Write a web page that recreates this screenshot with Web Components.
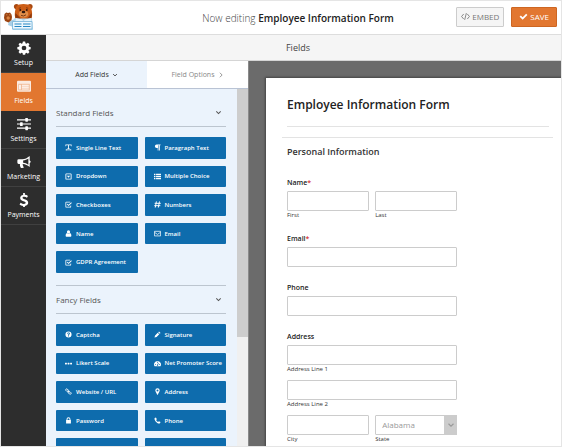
<!DOCTYPE html>
<html lang="en">
<head>
<meta charset="utf-8">
<title>Form Builder</title>
<style>
  html, body { margin: 0; height: 100%; }
  body {
    font-family: "Open Sans", "Noto Sans", sans-serif;
    color: #444;
    overflow: hidden;
  }
</style>
</head>
<body>
<form-builder></form-builder>
<script>
const ICONS = {
  gear: '<path fill-rule="evenodd" d="M6.7.6h2.6l.4 2 1.1.5 1.7-1.2 1.8 1.8-1.1 1.7.5 1.2 1.9.3v2.6l-2 .4-.5 1.1 1.2 1.7-1.8 1.8-1.7-1.1-1.1.5-.4 1.9H6.7l-.4-2-1.1-.5-1.7 1.2-1.8-1.8 1.1-1.7-.5-1.1-1.9-.4V6.9l2-.3.5-1.2-1.2-1.7 1.8-1.8 1.7 1.1 1.1-.5zM8 5.3a2.7 2.7 0 1 0 0 5.4 2.7 2.7 0 0 0 0-5.4z"/>',
  form: '<rect y="2" width="16" height="12.5" rx="1.2" opacity=".85"/><path d="M1.5 5.5h13v7.5h-13z" fill="#e27730" opacity=".45"/><path d="M5.5 6.5h8v1.2h-8zM5.5 8.7h8v1.2h-8zM5.5 10.9h8v1.2h-8zM2.5 6.5h1.8v5.6H2.5z"/>',
  sliders: '<path d="M0 2.5h16v1.4H0zM0 7.3h16v1.4H0zM0 12.1h16v1.4H0z"/><rect x="9.5" y="1" width="3" height="4.3" rx=".6"/><rect x="3.5" y="5.9" width="3" height="4.3" rx=".6"/><rect x="9.5" y="10.7" width="3" height="4.3" rx=".6"/>',
  horn: '<path fill-rule="evenodd" d="M14.5 1v5.2a1.5 1.5 0 0 1 0 2.9v4.6c-2.5-2-5-3.2-7.7-3.4-.7.6-.4 1.3.2 1.8-.4.7.2 1.3 1 1.9-.7 1.2-3 1.2-3.9.3C3.6 12.6 3 11.4 3.5 10.2H1.8A1.5 1.5 0 0 1 .4 8.7V6.3a1.5 1.5 0 0 1 1.5-1.5H6C9 4.8 11.8 3.3 14.5 1zM13 4c-1.9 1.3-3.9 2-6 2.2v2.6c2.1.2 4.1.9 6 2.2z"/>',
  dollar: '<path d="M7 0h2v2.1c1.3.1 2.6.6 3.5 1.3l-1.1 2c-1-.7-2-1.1-3.2-1.1-1.2 0-1.9.5-1.9 1.2 0 .9.9 1.2 2.4 1.7 2.3.8 4.1 1.7 4.1 4 0 1.9-1.4 3.3-3.8 3.6V16H7v-1.2c-1.6-.1-3.1-.8-4.1-1.7l1.3-2c1.1.9 2.4 1.4 3.7 1.4 1.3 0 2-.5 2-1.3 0-1-1-1.4-2.5-1.9C5.3 8.6 3.6 7.7 3.6 5.6 3.6 3.8 5 2.5 7 2.2z"/>',
  code: '<path d="M4.8 3.5 1 8l3.8 4.5M11.2 3.5 15 8l-3.8 4.5M9.5 2l-3 12" fill="none" stroke="currentColor" stroke-width="1.5"/>',
  check: '<path d="m1 8.6 2.3-2.4 3.2 3.1 6.2-6.2L15 5.5l-8.5 8.4z"/>',
  down: '<path d="m3 5.5 5 5 5-5" fill="none" stroke="currentColor" stroke-width="2.3"/>',
  right: '<path d="m5 2 6 6-6 6" fill="none" stroke="currentColor" stroke-width="2.3"/>',
  text: '<path d="M1 1h14v4h-1.3l-.7-2H9v7h2v1.5H5V10h2V3H3l-.7 2H1zM1 13.5l2.5-2v1.3h9v-1.3l2.5 2-2.5 2v-1.3h-9v1.3z"/>',
  para: '<path d="M6 1h9v1.8h-1.5V15h-1.8V2.8h-1.5V15H8.4V9H6a4 4 0 0 1 0-8z"/>',
  drop: '<path fill-rule="evenodd" d="M3 1h10a2 2 0 0 1 2 2v10a2 2 0 0 1-2 2H3a2 2 0 0 1-2-2V3a2 2 0 0 1 2-2zm0 1.8v10.4h10V2.8zM4.3 6h7.4L8 11z"/>',
  list: '<path d="M0 1.5h3.3v3H0zM4.7 1.5H16v3H4.7zM0 6.5h3.3v3H0zM4.7 6.5H16v3H4.7zM0 11.5h3.3v3H0zM4.7 11.5H16v3H4.7z"/>',
  tick: '<path d="M12.2 1.5H3a2 2 0 0 0-2 2V13a2 2 0 0 0 2 2h9a2 2 0 0 0 2-2V9.5l-1.8 1.7v2H2.8V3.3h8z"/><path d="m4 7.5 1.5-1.5 2.7 2.6 5.8-5.8 1.6 1.6-7.4 7.3z"/>',
  hash: '<path d="m5.5 1-2.6 14M12.5 1 9.9 15M1.5 5.3h14M.5 10.7h14" fill="none" stroke="currentColor" stroke-width="2.2"/>',
  user: '<circle cx="8" cy="4.5" r="3.7"/><path d="M4.5 7c1.8 2 5.2 2 7 0 2 .9 3 3.5 3 6 0 1.5-1 2.3-2.3 2.3H3.8C2.5 15.3 1.5 14.5 1.5 13c0-2.5 1-5.1 3-6z"/>',
  mail: '<path d="M1 3h14v10.5H1zM1.5 5.5 8 10l6.5-4.5" fill="none" stroke="currentColor" stroke-width="1.7"/>',
  help: '<path fill-rule="evenodd" d="M8 1a7 7 0 1 1 0 14A7 7 0 0 1 8 1zM4.8 6h2.1c.1-.8 2.1-.9 2.1.2 0 1-2.1 1-2.1 3.3h2c0-1.4 2.3-1.4 2.3-3.6C11.2 2.6 5 2.6 4.8 6zM6.9 10.5v2h2v-2z"/>',
  pencil: '<path d="m11.5 1 3.5 3.5-2 2L9.5 3zM8.5 4 12 7.5 6 13.5 1 15l1.5-5z"/>',
  dots: '<rect x="0" y="6" width="4.3" height="4" rx="1"/><rect x="5.9" y="6" width="4.3" height="4" rx="1"/><rect x="11.7" y="6" width="4.3" height="4" rx="1"/>',
  gauge: '<path fill-rule="evenodd" d="M8 2a8 8 0 0 1 6.8 12H1.2A8 8 0 0 1 8 2zM7 4v2h2V4zM2.5 9v2h2V9zM11.7 9v2h2V9zM9.5 6.5 8 10a1.6 1.6 0 1 0 1.3.5l1.5-3.5z"/>',
  link: '<g fill="none" stroke="currentColor" stroke-width="2"><rect x="1.5" y="3" width="7" height="4.5" rx="2" transform="rotate(45 5 5)"/><rect x="7.5" y="9" width="7" height="4.5" rx="2" transform="rotate(45 11 11)"/><path d="m6 6 4 4"/></g>',
  pin: '<path fill-rule="evenodd" d="M8 .5a5 5 0 0 1 5 5c0 2.5-2.5 5-4 9.5-.3.8-1.7.8-2 0C5.5 10.5 3 8 3 5.5a5 5 0 0 1 5-5zM8 3.3a2.3 2.3 0 1 0 0 4.6 2.3 2.3 0 0 0 0-4.6z"/>',
  lock: '<path fill-rule="evenodd" d="M3.5 7V5a4.5 4.5 0 0 1 9 0v2h1v8h-11V7zM5.7 7h4.6V5a2.3 2.3 0 0 0-4.6 0z"/>',
  phone: '<path d="M1.5 2.5 4.5 1l2 4-1.7 1.6c.9 2 2.5 3.6 4.6 4.6L11 9.5l4 2-1.5 3c-1 .9-3.5.7-6-1C4.5 11.5 2.5 9 1.5 6c-.4-1.5-.4-2.8 0-3.5z"/>',
  clock: '<path d="M3 2h10v12H3zM4 0h2v4H4zM10 0h2v4h-2z"/>',
  eye: '<path d="M0 8c4-7 12-7 16 0-4 7-12 7-16 0z"/>'
};

function define(name, render) {
  customElements.define(name, class extends HTMLElement {
    connectedCallback() {
      if (this.shadowRoot) return;
      const attr = (key) => this.getAttribute(key) || '';
      this.attachShadow({ mode: 'open' }).innerHTML = render(attr, this);
    }
  });
}

define('ui-icon', (a) => `
  <style>
    :host { display: inline-block; flex: none; width: var(--icon, 7px); height: var(--icon, 7px); }
    svg { display: block; width: 100%; height: 100%; }
  </style>
  <svg viewBox="0 0 16 16" fill="currentColor" aria-hidden="true">${ICONS[a('name')]}</svg>`);

define('bear-logo', () => `
  <style>:host { display: block; width: 32px; height: 28px; } svg { display: block; }</style>
  <svg width="32" height="28" viewBox="0 0 32 28" role="img" aria-label="Bear mascot">
    <path d="M6 18l5-1.5 2 5-3 2.5-5-2z" fill="#a9cfe6"/>
    <circle cx="13.5" cy="3.5" r="2.6" fill="#a8480f"/><circle cx="27" cy="3.5" r="2.6" fill="#a8480f"/>
    <path d="M13.5 3.5C15.500.3 25.5.3 27.5 3.5c1.700 3.5 2 8 1.2 11.5-2 3-14.500 3-16.500 0-.8-3.5-.5-8 1.300-11.5z" fill="#cc5d16"/>
    <path d="M12.500 10c-.8 3 0 5 1 6.5h5zM28.5 10c.6 3 0 5-1 6.5h-4z" fill="#8e3b10"/>
    <ellipse cx="20.5" cy="11" rx="4.8" ry="3.4" fill="#e08d48"/>
    <ellipse cx="20.5" cy="9" rx="1.8" ry="1.2" fill="#34190e"/>
    <path d="M18 12.3q2.5 1.7 5-.5" fill="none" stroke="#5c260e" stroke-width=".8"/>
    <circle cx="17.3" cy="7" r=".9" fill="#34190e"/><circle cx="23.8" cy="7" r=".9" fill="#34190e"/>
    <path d="M15.8 5.3l2.2-.6M23 4.7l2.2.6" stroke="#6a2b0d" stroke-width=".7"/>
    <path d="M11 15.5h18l1 11.5H9.500z" fill="#b4d9ee"/>
    <path d="M13 15l6 1.5 1.5 2 1.5-2 6-1.5.5 3.5-6.5 1h-3l-6.5-1z" fill="#e3f2fa"/>
    <path d="M9.5 18.5h19.500v7.500h-19.500z" fill="#edf7fd" stroke="#72b1d8" stroke-width=".8"/>
    <path d="M11.5 21h7M11.5 23.5h7M20 21h7.5M20 23.5h7.5" stroke="#2687c4" stroke-width="1.2"/>
    <path d="M1.500 11l1.700-1.500 1.800.5 2-.5 1.500 2 .5 2.500-.5 3-3 2.500-3.500-1.500L1 15z" fill="#9c4512"/>
    <circle cx="5.2" cy="15" r="1.7" fill="#dc8542"/><path d="M3.3 11.8h1M6.3 11.8h1" stroke="#e2965a"/>
  </svg>`);

define('nav-item', (a, el) => `
  <style>
    :host { display: block; border-bottom: 1px solid #404040; background: #2d2d2d; }
    :host([active]) { background: #e27730; border-color: #e27730; }
    a { display: flex; flex-direction: column; align-items: center; gap: 2px; height: 31px; padding-top: 6px;
        color: #fff; text-decoration: none; font-size: 7px; line-height: 12px; font-weight: 400; --icon: 14px; }
  </style>
  <a href="#" ${el.hasAttribute('active') ? 'aria-current="page"' : ''}><ui-icon name="${a('icon')}"></ui-icon><slot></slot></a>`);

define('side-nav', () => `
  <style>:host { display: block; flex: none; width: 45px; background: #2d2d2d; }</style>
  <nav>
    <nav-item icon="gear">Setup</nav-item>
    <nav-item icon="form" active>Fields</nav-item>
    <nav-item icon="sliders">Settings</nav-item>
    <nav-item icon="horn">Marketing</nav-item>
    <nav-item icon="dollar">Payments</nav-item>
  </nav>`);

define('top-button', (a) => `
  <style>
    :host { display: block; }
    button { display: flex; align-items: center; justify-content: center; gap: 2px; height: 20px; padding: 0 4px;
      border: 1px solid #ccc; border-radius: 1px; background: #f5f5f5; color: #777;
      font: 8px/12px "Open Sans", sans-serif; --icon: 9px; }
    :host([primary]) button { background: #e27730; border-color: #cd6622; color: #fff; padding: 0 7px; }
  </style>
  <button type="button"><ui-icon name="${a('icon')}"></ui-icon><slot></slot></button>`);

define('top-bar', () => `
  <style>
    :host { display: grid; grid-template-columns: auto 1fr auto; align-items: center; flex: none;
      height: 33px; border-bottom: 1px solid #ddd; background: #fff; }
    bear-logo { grid-area: 1 / 1; margin: 0 0 2px 2px; }
    h1 { grid-area: 1 / 1 / 2 / -1; justify-self: center; margin: 0; padding-left: 34px;
      font-size: 10px; line-height: 16px; font-weight: 300; color: #444; }
    b { font-weight: 600; color: #222; }
    div { grid-area: 1 / 3; display: flex; gap: 7px; padding-right: 4px; margin-bottom: 2px; }
  </style>
  <bear-logo></bear-logo>
  <h1>Now editing <b>Employee Information Form</b></h1>
  <div><top-button icon="code">EMBED</top-button><top-button icon="check" primary>SAVE</top-button></div>`);

define('field-button', (a) => `
  <style>
    :host { display: grid; }
    button { display: flex; align-items: center; gap: 4px; min-width: 0; padding: 0 9px; border: 0; border-radius: 1px;
      background: #0e6cad; color: #fff; font: 600 6px/10px "Open Sans", sans-serif; white-space: nowrap; --icon: 7px; }
  </style>
  <button type="button"><ui-icon name="${a('icon')}"></ui-icon><slot></slot></button>`);

define('field-group', (a) => `
  <style>
    :host { display: block; }
    h2 { margin: 0; border-bottom: 1px solid #bcc5cf; }
    h2 button { display: flex; align-items: center; justify-content: space-between; width: 100%; height: 27px;
      padding: 0 4px 0 0; border: 0; background: none; color: #555; font: 8px/12px "Open Sans", sans-serif; --icon: 7px; }
    div { display: grid; grid-template-columns: 1fr 1fr; grid-auto-rows: 1fr; gap: 7px; min-height: 136px; margin: 10px 0 12px; }
  </style>
  <h2><button type="button" aria-expanded="true">${a('heading')}<ui-icon name="down"></ui-icon></button></h2>
  <div><slot></slot></div>`);

define('field-panel', () => `
  <style>
    :host { display: flex; flex-direction: column; flex: none; width: 202px; background: #ebf3fc; }
    .tabs { display: grid; grid-template-columns: 1fr 1fr; flex: none; height: 27px; border-bottom: 1px solid #b9c3d4; }
    .tabs button { display: flex; align-items: center; justify-content: center; gap: 3px; border: 0; background: #fff;
      color: #888; font: 7px/12px "Open Sans", sans-serif; --icon: 6px; }
    .tabs button[aria-selected=true] { background: #ebf3fc; color: #333; }
    .body { display: flex; flex: 1; min-height: 0; }
    .list { flex: 1; padding: 10px 11px 0 10px; overflow: hidden; }
    .list field-group + field-group { border-top: 1px solid #bcc5cf; }
    .bar { width: 11px; background: #f0f0f0; }
    .thumb { height: 248px; background: #cdcdcd; }
  </style>
  <div class="tabs" role="tablist">
    <button type="button" role="tab" aria-selected="true">Add Fields <ui-icon name="down"></ui-icon></button>
    <button type="button" role="tab" aria-selected="false">Field Options <ui-icon name="right"></ui-icon></button>
  </div>
  <div class="body">
    <div class="list">
      <field-group heading="Standard Fields">
        <field-button icon="text">Single Line Text</field-button>
        <field-button icon="para">Paragraph Text</field-button>
        <field-button icon="drop">Dropdown</field-button>
        <field-button icon="list">Multiple Choice</field-button>
        <field-button icon="tick">Checkboxes</field-button>
        <field-button icon="hash">Numbers</field-button>
        <field-button icon="user">Name</field-button>
        <field-button icon="mail">Email</field-button>
        <field-button icon="tick">GDPR Agreement</field-button>
      </field-group>
      <field-group heading="Fancy Fields">
        <field-button icon="help">Captcha</field-button>
        <field-button icon="pencil">Signature</field-button>
        <field-button icon="dots">Likert Scale</field-button>
        <field-button icon="gauge">Net Promoter Score</field-button>
        <field-button icon="link">Website / URL</field-button>
        <field-button icon="pin">Address</field-button>
        <field-button icon="lock">Password</field-button>
        <field-button icon="phone">Phone</field-button>
        <field-button icon="clock"></field-button>
        <field-button icon="eye"></field-button>
      </field-group>
    </div>
    <div class="bar" aria-hidden="true"><div class="thumb"></div></div>
  </div>`);

const LABEL = 'display: block; padding: 0 0 2px; font-size: 7px; line-height: 12px; font-weight: 600; color: #222;';

define('text-box', (a, el) => `
  <style>
    :host { display: block; min-width: 0; }
    .label { ${LABEL} }
    .caption { display: block; padding-top: 1px; font-size: 6px; line-height: 6px; color: #333; }
    i { font-style: normal; color: #d63637; }
    .control { display: grid; grid-template-columns: 1fr 13px; }
    input, select { box-sizing: border-box; grid-area: 1 / 1 / 2 / -1; width: 100%; height: 20px; margin: 0; padding: 0 6px;
      border: 1px solid #ccc; border-radius: 1px; background: #fff; font: 8px/12px "Open Sans", sans-serif; color: #999; }
    select { appearance: none; opacity: 1; }
    .arrow { grid-area: 1 / 2; display: grid; place-items: center; z-index: 1; background: #ccc; color: #999; pointer-events: none; --icon: 8px; }
  </style>
  ${a('label') ? `<label class="label" for="c">${a('label')}${el.hasAttribute('required') ? '<i>*</i>' : ''}</label>` : ''}
  <div class="control">${a('option')
    ? `<select id="c"><option>${a('option')}</option></select><span class="arrow"><ui-icon name="down"></ui-icon></span>`
    : '<input id="c" type="text">'}</div>
  ${a('caption') ? `<label class="caption" for="c">${a('caption')}</label>` : ''}`);

define('field-set', (a, el) => `
  <style>
    :host { display: block; }
    fieldset { min-width: 0; margin: 0; padding: 0; border: 0; }
    legend { ${LABEL} }
    i { font-style: normal; color: #d63637; }
    div { display: grid; grid-template-columns: 1fr 1fr; gap: 8px 6px; }
    ::slotted([wide]) { grid-column: 1 / -1; }
  </style>
  <fieldset><legend>${a('label')}${el.hasAttribute('required') ? '<i>*</i>' : ''}</legend><div><slot></slot></div></fieldset>`);

define('form-preview', () => `
  <style>
    :host { display: block; flex: 1; min-width: 0; overflow: hidden; padding: 17px 0 0 17px; background: #6b6b6b; border-left: 1px solid #8a8a8a; }
    form { min-height: 100%; padding: 17px 12px 0 21px; background: #fff; box-shadow: 0 0 2px 1px #444; }
    h2 { margin: 0; padding-bottom: 11px; border-bottom: 1px solid #e3e3e3; font-size: 12px; line-height: 20px; font-weight: 600; color: #222; }
    h3 { margin: 10px -4px 17px -5px; padding: 6px 5px 0; border-top: 1px solid #e3e3e3; font-size: 9px; line-height: 16px; font-weight: 600; color: #333; }
    .fields { display: grid; gap: 15px; width: 65%; }
  </style>
  <form>
    <h2>Employee Information Form</h2>
    <h3>Personal Information</h3>
    <div class="fields">
      <field-set label="Name" required><text-box caption="First"></text-box><text-box caption="Last"></text-box></field-set>
      <text-box label="Email" required></text-box>
      <text-box label="Phone"></text-box>
      <field-set label="Address">
        <text-box wide caption="Address Line 1"></text-box>
        <text-box wide caption="Address Line 2"></text-box>
        <text-box caption="City"></text-box>
        <text-box caption="State" option="Alabama"></text-box>
      </field-set>
    </div>
  </form>`);

define('form-builder', () => `
  <style>
    :host { display: flex; flex-direction: column; box-sizing: border-box; height: 100vh; border: 1px solid #e5e5e5; overflow: hidden; }
    .main { display: flex; flex: 1; min-height: 0; }
    .work { display: flex; flex-direction: column; flex: 1; min-width: 0; }
    .strip { flex: none; height: 25px; border-bottom: 1px solid #d5d5d5; background: #f5f5f5; text-align: center;
      font-size: 9px; line-height: 25px; padding-right: 11px; color: #444; }
    .panes { display: flex; flex: 1; min-height: 0; }
  </style>
  <top-bar></top-bar>
  <div class="main">
    <side-nav></side-nav>
    <div class="work">
      <div class="strip">Fields</div>
      <div class="panes"><field-panel></field-panel><form-preview></form-preview></div>
    </div>
  </div>`);
</script>
</body>
</html>
